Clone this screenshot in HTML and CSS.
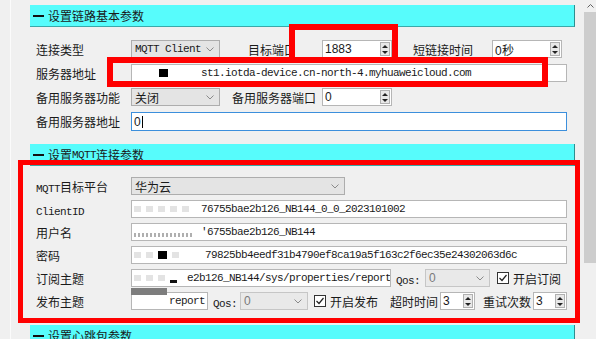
FILE: index.html
```html
<!DOCTYPE html>
<html lang="zh-CN">
<head>
  <meta charset="UTF-8" />
  <title>链路参数设置</title>
  <link rel="stylesheet" href="styles.css">
</head>
<body>
<div class="window">
  <div class="edge"></div>

  <div class="content">
    <!-- 链路基本参数 -->
    <div class="section">
      <div class="section-title"><span class="dash"></span>设置链路基本参数</div>
      <div class="section-body">
        <div class="row">
          <span class="label">连接类型</span>
          <div class="select w89"><span class="mono">MQTT Client</span><svg class="chev" width="8" height="5" viewBox="0 0 8 5"><polyline points="0.5,0.5 4,4 7.5,0.5" fill="none" stroke="#8a8a8a" stroke-width="1"/></svg></div>
          <span class="label-mid p28 w102">目标端口</span>
          <div class="field spin w70"><span class="sans">1883</span><div class="spin-btns"><i class="up"></i><i class="down"></i></div></div>
          <span class="label-mid p21 w100">短链接时间</span>
          <div class="field spin w70"><span class="sans">0秒</span><div class="spin-btns"><i class="up"></i><i class="down"></i></div></div>
        </div>
        <div class="row">
          <span class="label">服务器地址</span>
          <div class="field full"><span class="mask w67"><i class="gap24"></i><i class="blot dark"></i></span><span class="mono">st1.iotda-device.cn-north-4.myhuaweicloud.com</span></div>
        </div>
        <div class="row">
          <span class="label">备用服务器功能</span>
          <div class="select w89"><span>关闭</span><svg class="chev" width="8" height="5" viewBox="0 0 8 5"><polyline points="0.5,0.5 4,4 7.5,0.5" fill="none" stroke="#8a8a8a" stroke-width="1"/></svg></div>
          <span class="label-mid p12 w102">备用服务器端口</span>
          <div class="field spin w70"><span class="sans">0</span><div class="spin-btns"><i class="up"></i><i class="down"></i></div></div>
        </div>
        <div class="row tall">
          <span class="label">备用服务器地址</span>
          <div class="field full focus"><span class="sans">0</span><span class="caret"></span></div>
        </div>
      </div>
    </div>

    <!-- MQTT连接参数 -->
    <div class="section">
      <div class="section-title"><span class="dash"></span>设置<span class="mono">MQTT</span>连接参数</div>
      <div class="section-body tight">
        <div class="row">
          <span class="label"><span class="mono">MQTT</span>目标平台</span>
          <div class="select w214"><span>华为云</span><svg class="chev" width="8" height="5" viewBox="0 0 8 5"><polyline points="0.5,0.5 4,4 7.5,0.5" fill="none" stroke="#8a8a8a" stroke-width="1"/></svg></div>
        </div>
        <div class="row">
          <span class="label"><span class="mono">ClientID</span></span>
          <div class="field full"><span class="mask w67"><i class="blot"></i><i class="blot"></i><i class="blot"></i><i class="blot"></i><i class="blot"></i></span><span class="mono">76755bae2b126_NB144_0_0_2023101002</span></div>
        </div>
        <div class="row">
          <span class="label">用户名</span>
          <div class="field full"><span class="mask w67"><i class="smear"></i></span><span class="mono">'6755bae2b126_NB144</span></div>
        </div>
        <div class="row">
          <span class="label">密码</span>
          <div class="field full"><span class="mask w71"><i class="blot"></i><i class="blot"></i><i class="blot dark"></i><i class="blot"></i></span><span class="mono">79825bb4eedf31b4790ef8ca19a5f163c2f6ec35e24302063d6c</span></div>
        </div>
        <div class="row">
          <span class="label">订阅主题</span>
          <div class="field w260"><span class="mask w53"><i class="blot"></i><i class="blot"></i><i class="blot"></i><i class="blot low"></i></span><span class="mono">e2b126_NB144/sys/properties/report</span></div>
          <span class="label-mid p5 w34"><span class="mono">Qos:</span></span>
          <div class="select off w65"><span class="sans">0</span><svg class="chev" width="8" height="5" viewBox="0 0 8 5"><polyline points="0.5,0.5 4,4 7.5,0.5" fill="none" stroke="#8a8a8a" stroke-width="1"/></svg></div>
          <span class="check m7"><svg width="10" height="10" viewBox="0 0 10 10"><polyline points="1.5,5 4,7.5 8.5,2" fill="none" stroke="#222" stroke-width="1.2"/></svg></span>
          <span class="check-text">开启订阅</span>
        </div>
        <div class="row">
          <span class="label">发布主题</span>
          <div class="field w77 end"><span class="mono">report</span></div>
          <span class="label-mid p5 w32"><span class="mono">Qos:</span></span>
          <div class="select off w68"><span class="sans">0</span><svg class="chev" width="8" height="5" viewBox="0 0 8 5"><polyline points="0.5,0.5 4,4 7.5,0.5" fill="none" stroke="#8a8a8a" stroke-width="1"/></svg></div>
          <span class="check m6"><svg width="10" height="10" viewBox="0 0 10 10"><polyline points="1.5,5 4,7.5 8.5,2" fill="none" stroke="#222" stroke-width="1.2"/></svg></span>
          <span class="check-text">开启发布</span>
          <span class="label-mid p12 w62">超时时间</span>
          <div class="field spin w35"><span class="sans">3</span><div class="spin-btns"><i class="up"></i><i class="down"></i></div></div>
          <span class="label-mid p8 w58">重试次数</span>
          <div class="field spin w34"><span class="sans">3</span><div class="spin-btns"><i class="up"></i><i class="down"></i></div></div>
        </div>
      </div>
    </div>

    <!-- 心跳包参数 -->
    <div class="section">
      <div class="section-title"><span class="dash"></span>设置心跳包参数</div>
    </div>
  </div>

  <div class="scrollbar">
    <div class="scroll-up"><svg width="7" height="4" viewBox="0 0 7 4"><polyline points="0.5,3.5 3.5,0.5 6.5,3.5" fill="none" stroke="#606060" stroke-width="1"/></svg></div>
    <div class="scroll-thumb"></div>
  </div>

  <!-- 标注框 -->
  <div class="mark mark-port"></div>
  <div class="mark mark-addr"></div>
  <div class="mark mark-mqtt"></div>
  <div class="redact-bar"></div>
</div>
</body>
</html>
```

FILE: styles.css
```css
* {
  box-sizing: border-box;
}

body {
  margin: 0;
  background: #f0f0f0;
  font-family: "Noto Sans CJK SC", "Microsoft YaHei", sans-serif;
  font-size: 12px;
  color: #1a1a1a;
  overflow: hidden;
}

.window {
  position: relative;
  display: flex;
  width: 596px;
  height: 339px;
  overflow: hidden;
}

.edge {
  width: 10px;
  flex: none;
}

.content {
  flex: 1;
  border-left: 1px solid #fbfbfb;
  padding: 5px 9px 0 19px;
}

/* Section header */
.section-title {
  height: 22px;
  background: #57fcfc;
  border-right: 1px solid #2e8e8e;
  border-bottom: 1px solid #3aa9a9;
  display: flex;
  align-items: center;
  padding-left: 3px;
  white-space: nowrap;
}

.dash {
  width: 11px;
  height: 2px;
  background: #111;
  margin-right: 4px;
}

.section-body {
  display: flex;
  flex-direction: column;
  gap: 6px;
  padding: 13px 0 13px;
}

.section-body.tight {
  gap: 5px;
  padding: 11px 0 15px;
}

.row {
  display: flex;
  align-items: center;
  height: 18px;
  white-space: nowrap;
}

.row.tall {
  height: 19px;
}

.label {
  width: 101px;
  flex: none;
  padding-left: 6px;
}

.label-mid {
  flex: none;
}

.p5 { padding-left: 5px; }
.p8 { padding-left: 8px; }
.p12 { padding-left: 12px; }
.p21 { padding-left: 21px; }
.p28 { padding-left: 28px; }

.w32 { width: 32px; }
.w34 { width: 34px; }
.w35 { width: 35px; }
.w58 { width: 58px; }
.w62 { width: 62px; }
.w65 { width: 65px; }
.w68 { width: 68px; }
.w70 { width: 70px; }
.w77 { width: 77px; }
.w89 { width: 89px; }
.w100 { width: 100px; }
.w102 { width: 102px; }
.w214 { width: 214px; }
.w260 { width: 260px; }
.full { width: 436px; }

.mono {
  font-family: "Liberation Mono", "DejaVu Sans Mono", monospace;
  font-size: 11px;
  letter-spacing: -0.6px;
}

.sans {
  font-family: "Liberation Sans", Arial, sans-serif;
  font-size: 12px;
}

/* Inputs */
.field {
  flex: none;
  height: 100%;
  border: 1px solid #b6b6b6;
  background: #fff;
  display: flex;
  align-items: center;
  padding-left: 2px;
  overflow: hidden;
}

.field.end {
  justify-content: flex-end;
  padding-right: 2px;
}

.field.focus {
  border-color: #3c8fdc;
}

.caret {
  width: 1px;
  height: 12px;
  background: #000;
  margin-left: 1px;
}

.spin-btns {
  margin-left: auto;
  margin-right: 1px;
  width: 10px;
  height: 14px;
  border: 1px solid #b0b0b0;
  background: #e8e8e8;
  display: flex;
  flex-direction: column;
  align-items: center;
  justify-content: space-around;
  flex: none;
}

.spin-btns i {
  width: 0;
  height: 0;
  border-left: 3px solid transparent;
  border-right: 3px solid transparent;
}

.spin-btns .up {
  border-bottom: 3px solid #222;
}

.spin-btns .down {
  border-top: 3px solid #222;
}

/* Combo boxes */
.select {
  flex: none;
  height: 100%;
  border: 1px solid #adadad;
  background: #e4e4e4;
  display: flex;
  align-items: center;
  padding-left: 3px;
}

.select.off {
  color: #7a7a7a;
  border-color: #c6c6c6;
  background: #e9e9e9;
}

.chev {
  margin-left: auto;
  margin-right: 5px;
  flex: none;
}

/* Checkbox */
.check {
  width: 12px;
  height: 12px;
  border: 1px solid #333;
  background: #fff;
  display: flex;
  align-items: center;
  justify-content: center;
  flex: none;
}

.m6 { margin-left: 6px; }
.m7 { margin-left: 7px; }

.check-text {
  margin-left: 4px;
  flex: none;
}

/* Blurred parts of the screenshot */
.mask {
  display: inline-flex;
  align-items: center;
  flex: none;
  height: 100%;
  gap: 5px;
}

.w53 { width: 53px; }
.w67 { width: 67px; }
.w71 { width: 71px; }

.gap24 {
  width: 20px;
}

.blot {
  width: 7px;
  height: 6px;
  background: #e3e3e3;
}

.blot.dark {
  width: 9px;
  height: 8px;
  background: #000;
}

.blot.low {
  width: 7px;
  height: 3px;
  margin-top: 6px;
  background: #111;
}

.smear {
  width: 60px;
  height: 4px;
  margin-top: 6px;
  background: repeating-linear-gradient(90deg, #8d8d8d 0 2px, #fff 2px 4px);
  opacity: 0.7;
}

.redact-bar {
  position: absolute;
  left: 131px;
  top: 288px;
  width: 36px;
  height: 7px;
  background: #7d7d7d;
}

/* Scrollbar */
.scrollbar {
  width: 12px;
  flex: none;
  display: flex;
  flex-direction: column;
}

.scroll-up {
  height: 12px;
  display: flex;
  align-items: center;
  justify-content: center;
}

.scroll-thumb {
  height: 251px;
  background: #cdcdcd;
}

/* Red annotation boxes */
.mark {
  position: absolute;
  border: 6px solid #ff0000;
}

.mark-port {
  left: 289px;
  top: 24px;
  width: 109px;
  height: 39px;
}

.mark-addr {
  left: 107px;
  top: 57px;
  width: 441px;
  height: 30px;
}

.mark-mqtt {
  left: 18px;
  top: 160px;
  width: 562px;
  height: 163px;
  border-width: 5px;
}
```
